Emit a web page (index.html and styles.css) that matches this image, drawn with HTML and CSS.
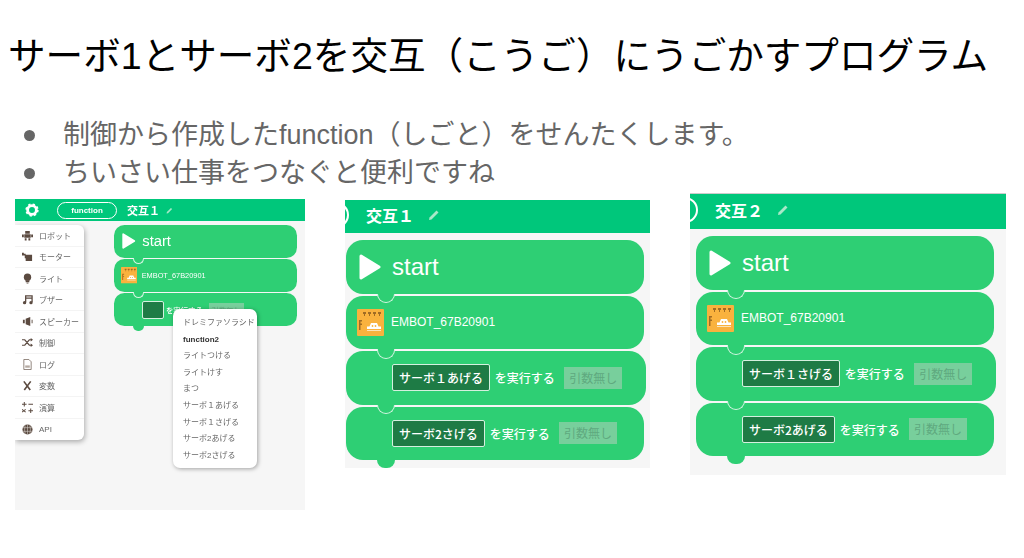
FILE: index.html
```html
<!DOCTYPE html>
<html lang="ja">
<head>
    <meta charset="UTF-8">
    <meta name="viewport" content="width=device-width, initial-scale=1.0">
    <title>サーボ1とサーボ2を交互にうごかすプログラム</title>
    <link rel="stylesheet" href="styles.css">
</head>
<body>
    <!-- 共通アイコン -->
    <svg class="defs" width="0" height="0">
        <symbol id="play" viewBox="0 0 22 26">
            <path d="M2 2 L20 13 L2 24 Z" fill="#fff" stroke="#fff" stroke-width="3" stroke-linejoin="round"/>
        </symbol>
        <symbol id="embot" viewBox="0 0 27 27">
            <rect width="27" height="27" rx="1" fill="#f9b23e"/>
            <path d="M6 3h3v2h-3zM11 3h3v2h-3zM16 3h3v2h-3zM21 3h3v2h-3z" fill="#a06c24"/>
            <path d="M7.500 5v2M12.500 5v2M17.500 5v2M22.500 5v2" stroke="#a06c24" stroke-width="1"/>
            <path d="M2 11h3v1.500h-1.500v2h1.500v1.500h-1.500v5h-1.500z" fill="#a06c24"/>
            <path d="M14 14h6l1.500 3.500h2.500v2.500h-14v-2.500h2.500z" fill="#fff"/>
            <path d="M10 21h14v1h-14z" fill="#fbe3b8"/>
            <circle cx="15.500" cy="17" r=".9" fill="#f9b23e"/>
            <circle cx="18.500" cy="17" r=".9" fill="#f9b23e"/>
        </symbol>
        <symbol id="pencil" viewBox="0 0 12 12">
            <path d="M1 11 L1.500 8.500 L8.500 1.500 L10.500 3.500 L3.500 10.500 Z" fill="#a8e8c8"/>
        </symbol>
    </svg>

    <div class="slide">
        <h1>サーボ1とサーボ2を交互（こうご）にうごかすプログラム</h1>
        <ul class="notes">
            <li>制御から作成したfunction（しごと）をせんたくします。</li>
            <li>ちいさい仕事をつなぐと便利ですね</li>
        </ul>

        <div class="panels">
            <!-- 左: メニューを開いたところ -->
            <section class="panel panel-menu">
                <header class="panel-head">
                    <svg class="gear" viewBox="0 0 16 16">
                        <circle cx="8" cy="8" r="5" fill="none" stroke="#fff" stroke-width="3.2"/>
                        <circle cx="8" cy="8" r="6.4" fill="none" stroke="#fff" stroke-width="2.4" stroke-dasharray="2.5 2.53"/>
                    </svg>
                    <span class="pill">function</span>
                    <span class="panel-title">交互１</span>
                    <svg class="pencil"><use href="#pencil"/></svg>
                </header>
                <div class="panel-body">
                    <ul class="sidebar">
                        <li>
                            <svg viewBox="0 0 12 12"><path d="M3.5 1h5v3h-5zM2.500 4.500h7v4h-7zM0 5h2v3h-2zM10 5h2v3h-2zM3 9h2v2.500h-2zM7 9h2v2.500h-2z" fill="#5b4a40"/></svg>
                            ロボット
                        </li>
                        <li>
                            <svg viewBox="0 0 12 12"><path d="M0 2h2v3h-2zM2 3h2v2h-2zM3 4h8v7h-7v-3h-1z" fill="#5b4a40"/></svg>
                            モーター
                        </li>
                        <li>
                            <svg viewBox="0 0 12 12"><circle cx="6" cy="4.500" r="4" fill="#5b4a40"/><path d="M4 8h4v2h-4zM5 10.500h2v1h-2z" fill="#5b4a40"/></svg>
                            ライト
                        </li>
                        <li>
                            <svg viewBox="0 0 12 12"><path d="M4 9V2h7v7M4 2v2.500h7" fill="none" stroke="#5b4a40" stroke-width="1.400"/><circle cx="2.800" cy="9.500" r="1.800" fill="#5b4a40"/><circle cx="9.800" cy="9.500" r="1.800" fill="#5b4a40"/></svg>
                            ブザー
                        </li>
                        <li>
                            <svg viewBox="0 0 12 12"><path d="M1 4h2v4h-2zM4 3l5-2v10l-5-2zM10.500 4h1v4h-1z" fill="#5b4a40"/></svg>
                            スピーカー
                        </li>
                        <li>
                            <svg viewBox="0 0 12 12"><path d="M0 3h3l5 6h2M0 9h3l5-6h2" fill="none" stroke="#5b4a40" stroke-width="1.300"/><path d="M9.500 1l2.500 2-2.500 2zM9.500 7l2.500 2-2.500 2z" fill="#5b4a40"/></svg>
                            制御
                        </li>
                        <li>
                            <svg viewBox="0 0 12 12"><path d="M2 .5h5.500l2.500 2.500v8.500h-8z" fill="#fff" stroke="#6b5b50" stroke-width=".8"/><path d="M3.500 7h5v2.500h-5z" fill="#b5aaa2"/></svg>
                            ログ
                        </li>
                        <li>
                            <svg viewBox="0 0 12 12"><path d="M2 1.500l7 9.500M9.500 1.500l-7 9.500" fill="none" stroke="#5b4a40" stroke-width="1.800"/></svg>
                            変数
                        </li>
                        <li>
                            <svg viewBox="0 0 12 12"><path d="M0 2.500h5M2.500 0v5M7 2.500h5M0 8l4 3M4 8l-4 3M7 9.500h5M9.500 7v5" fill="none" stroke="#5b4a40" stroke-width="1.100"/></svg>
                            演算
                        </li>
                        <li>
                            <svg viewBox="0 0 12 12"><circle cx="6" cy="6" r="5.500" fill="#5b4a40"/><path d="M.5 4h11M.5 8h11M6 .5v11M3.500 1.500q-1.500 4.500 0 9M8.500 1.500q1.500 4.500 0 9" fill="none" stroke="#d8d4d0" stroke-width=".6"/></svg>
                            API
                        </li>
                    </ul>

                    <div class="blocks">
                        <div class="block">
                            <svg class="play"><use href="#play"/></svg>
                            <span class="start-label">start</span>
                        </div>
                        <div class="block">
                            <svg class="embot"><use href="#embot"/></svg>
                            <span class="device-name">EMBOT_67B20901</span>
                        </div>
                        <div class="block block-run last">
                            <span class="fn-button empty"></span>
                            <span>を実行する</span>
                            <span class="no-args">引数無し</span>
                        </div>
                    </div>

                    <ul class="popup">
                        <li>ドレミファソラシド</li>
                        <li class="current">function2</li>
                        <li>ライトつける</li>
                        <li>ライトけす</li>
                        <li>まつ</li>
                        <li>サーボ１あげる</li>
                        <li>サーボ１さげる</li>
                        <li>サーボ2あげる</li>
                        <li>サーボ2さげる</li>
                    </ul>
                </div>
            </section>

            <!-- 交互１ -->
            <section class="panel panel-one">
                <header class="panel-head">
                    <span class="pill"></span>
                    <span class="panel-title">交互１</span>
                    <svg class="pencil"><use href="#pencil"/></svg>
                </header>
                <div class="blocks">
                    <div class="block">
                        <svg class="play"><use href="#play"/></svg>
                        <span class="start-label">start</span>
                    </div>
                    <div class="block">
                        <svg class="embot"><use href="#embot"/></svg>
                        <span class="device-name">EMBOT_67B20901</span>
                    </div>
                    <div class="block block-run wide">
                        <span class="fn-button">サーボ１あげる</span>
                        <span>を実行する</span>
                        <span class="no-args">引数無し</span>
                    </div>
                    <div class="block block-run last">
                        <span class="fn-button">サーボ2さげる</span>
                        <span>を実行する</span>
                        <span class="no-args">引数無し</span>
                    </div>
                </div>
            </section>

            <!-- 交互２ -->
            <section class="panel panel-two">
                <header class="panel-head">
                    <span class="pill"></span>
                    <span class="panel-title">交互２</span>
                    <svg class="pencil"><use href="#pencil"/></svg>
                </header>
                <div class="blocks">
                    <div class="block">
                        <svg class="play"><use href="#play"/></svg>
                        <span class="start-label">start</span>
                    </div>
                    <div class="block">
                        <svg class="embot"><use href="#embot"/></svg>
                        <span class="device-name">EMBOT_67B20901</span>
                    </div>
                    <div class="block block-run wide">
                        <span class="fn-button">サーボ１さげる</span>
                        <span>を実行する</span>
                        <span class="no-args">引数無し</span>
                    </div>
                    <div class="block block-run last">
                        <span class="fn-button">サーボ2あげる</span>
                        <span>を実行する</span>
                        <span class="no-args">引数無し</span>
                    </div>
                </div>
            </section>
        </div>
    </div>
</body>
</html>
```

FILE: styles.css
```css
html, body {
    margin: 0;
    background-color: #fff;
}

body {
    font-family: "Liberation Sans", "Noto Sans CJK JP", sans-serif;
    overflow: hidden;
}

.defs {
    position: absolute;
}

.slide {
    width: 1024px;
    height: 558px;
    box-sizing: border-box;
    padding: 33px 0 0 8px;
}

h1 {
    margin: 0;
    font-size: 37.6px;
    line-height: 46px;
    font-weight: 400;
    color: #000;
    white-space: nowrap;
}

.notes {
    list-style: none;
    margin: 37px 0 0;
    padding: 0 0 0 16px;
    font-size: 27px;
    line-height: 38px;
    color: #666;
}

.notes li {
    display: flex;
    align-items: center;
    white-space: nowrap;
}

.notes li::before {
    content: "";
    width: 11px;
    height: 11px;
    margin-right: 28px;
    border-radius: 50%;
    background-color: #666;
}

/* スクリーンショット3枚 */
.panels {
    display: flex;
    align-items: flex-start;
    gap: 40px;
    margin: 1px 0 0 7px;
}

.panel {
    background-color: #f6f6f6;
    overflow: hidden;
}

.panel-menu {
    width: 290px;
    height: 311px;
    margin-top: 6px;
    filter: blur(0.35px);
}

.panel-one {
    width: 305px;
    height: 268px;
    margin-top: 7px;
}

.panel-two {
    width: 316px;
    height: 282px;
    border-top: 1px solid #ccc;
    box-sizing: border-box;
}

.panel-head {
    display: flex;
    align-items: center;
    box-sizing: border-box;
    height: 33px;
    padding-bottom: 3px;
    background-color: #00c77b;
    color: #fff;
}

.panel-two .panel-head {
    height: 35px;
}

.pill {
    flex: none;
    box-sizing: border-box;
    width: 88px;
    height: 26px;
    margin-left: -84px;
    border: 2px solid #fff;
    border-radius: 13px;
}

.panel-two .pill {
    margin-left: -80px;
}

.panel-title {
    margin-left: 17px;
    font-size: 16px;
    font-weight: 700;
}

.pencil {
    width: 12px;
    height: 12px;
    margin-left: 14px;
}

.panel-menu .panel-head {
    height: 22px;
    padding-bottom: 0;
}

.gear {
    width: 14px;
    height: 14px;
    margin-left: 10px;
}

.panel-menu .pill {
    width: 60px;
    height: 17px;
    margin-left: 18px;
    border-width: 1px;
    font-size: 8px;
    font-weight: 700;
    line-height: 15px;
    text-align: center;
}

.panel-menu .panel-title {
    margin-left: 10px;
    font-size: 11px;
}

.panel-menu .pencil {
    width: 7px;
    height: 7px;
    margin-left: 6px;
}

.panel-body {
    position: relative;
    display: flex;
    align-items: flex-start;
    padding-top: 4px;
}

/* ブロック: 寸法はfont-size基準で、左のパネルだけ縮小 */
.blocks {
    font-size: 10px;
    margin: 0.7em 0 0 0.1em;
    width: 29.8em;
    color: #fff;
}

.panel-two .blocks {
    margin: 0.7em 0 0 0.6em;
}

.panel-menu .blocks {
    font-size: 6.15px;
    margin: 0 0 0 30px;
}

.block {
    position: relative;
    display: flex;
    align-items: center;
    box-sizing: border-box;
    height: 5.35em;
    margin-bottom: 0.2em;
    padding-left: 1.3em;
    border-radius: 1.7em;
    background-color: #2ecf74;
}

.block::after {
    content: "";
    position: absolute;
    z-index: 1;
    left: 3.1em;
    bottom: -0.95em;
    box-sizing: border-box;
    width: 1.8em;
    height: 0.95em;
    border: 0.12em solid #d5f5e2;
    border-top: 0;
    border-radius: 0 0 0.9em 0.9em;
    background-color: #2ecf74;
}

.block.last::after {
    border: 0;
    bottom: -0.8em;
    height: 0.8em;
}

.block.wide {
    margin-right: -0.2em;
}

.play {
    width: 2.2em;
    height: 2.6em;
    margin-right: 1.1em;
}

.start-label {
    font-size: 2.4em;
}

.embot {
    width: 2.7em;
    height: 2.7em;
    margin: 0 0.7em 0 -0.2em;
}

.device-name {
    font-size: 1.2em;
}

.block-run {
    padding-left: 4.6em;
    font-family: "Noto Sans CJK JP", sans-serif;
}

.block-run span {
    font-size: 1.2em;
    font-weight: 500;
    white-space: nowrap;
}

.fn-button {
    box-sizing: border-box;
    height: 2.25em;
    margin-right: 0.4em;
    padding: 0 0.5em;
    border: 1px solid #d5f0df;
    border-radius: 2px;
    background-color: #1e7b45;
    line-height: calc(2.25em - 2px);
}

.fn-button.empty {
    width: 2.9em;
    height: 2.4em;
    margin-right: 0.3em;
}

.block-run .no-args {
    box-sizing: border-box;
    height: 1.85em;
    margin-left: 0.8em;
    padding: 0 0.4em;
    background-color: #78cf9c;
    color: #5fa97f;
    font-weight: 400;
    line-height: 1.85em;
}

/* 左のパネルのメニュー類 */
.sidebar {
    flex: none;
    list-style: none;
    width: 69px;
    margin: 0;
    padding: 0;
    border-radius: 0 6px 6px 0;
    background-color: #fff;
    box-shadow: 1px 2px 5px rgba(0, 0, 0, 0.3);
    font-size: 8px;
    color: #666;
}

.sidebar li {
    display: flex;
    align-items: center;
    gap: 6px;
    height: 21.5px;
    box-sizing: border-box;
    padding-left: 7px;
    border-bottom: 1px solid #f4f4f4;
}

.sidebar li:last-child {
    border-bottom: 0;
}

.sidebar svg {
    width: 11px;
    height: 11px;
}

.popup {
    position: absolute;
    z-index: 2;
    left: 158px;
    top: 88px;
    width: 84px;
    box-sizing: border-box;
    list-style: none;
    margin: 0;
    padding: 6px 0 4px 10px;
    border-radius: 7px;
    background-color: #fff;
    box-shadow: 1px 1px 4px rgba(0, 0, 0, 0.35);
    font-size: 8px;
    color: #666;
}

.popup li {
    height: 16.6px;
    line-height: 16.6px;
    white-space: nowrap;
}

.popup .current {
    color: #333;
    font-weight: 700;
}
```
